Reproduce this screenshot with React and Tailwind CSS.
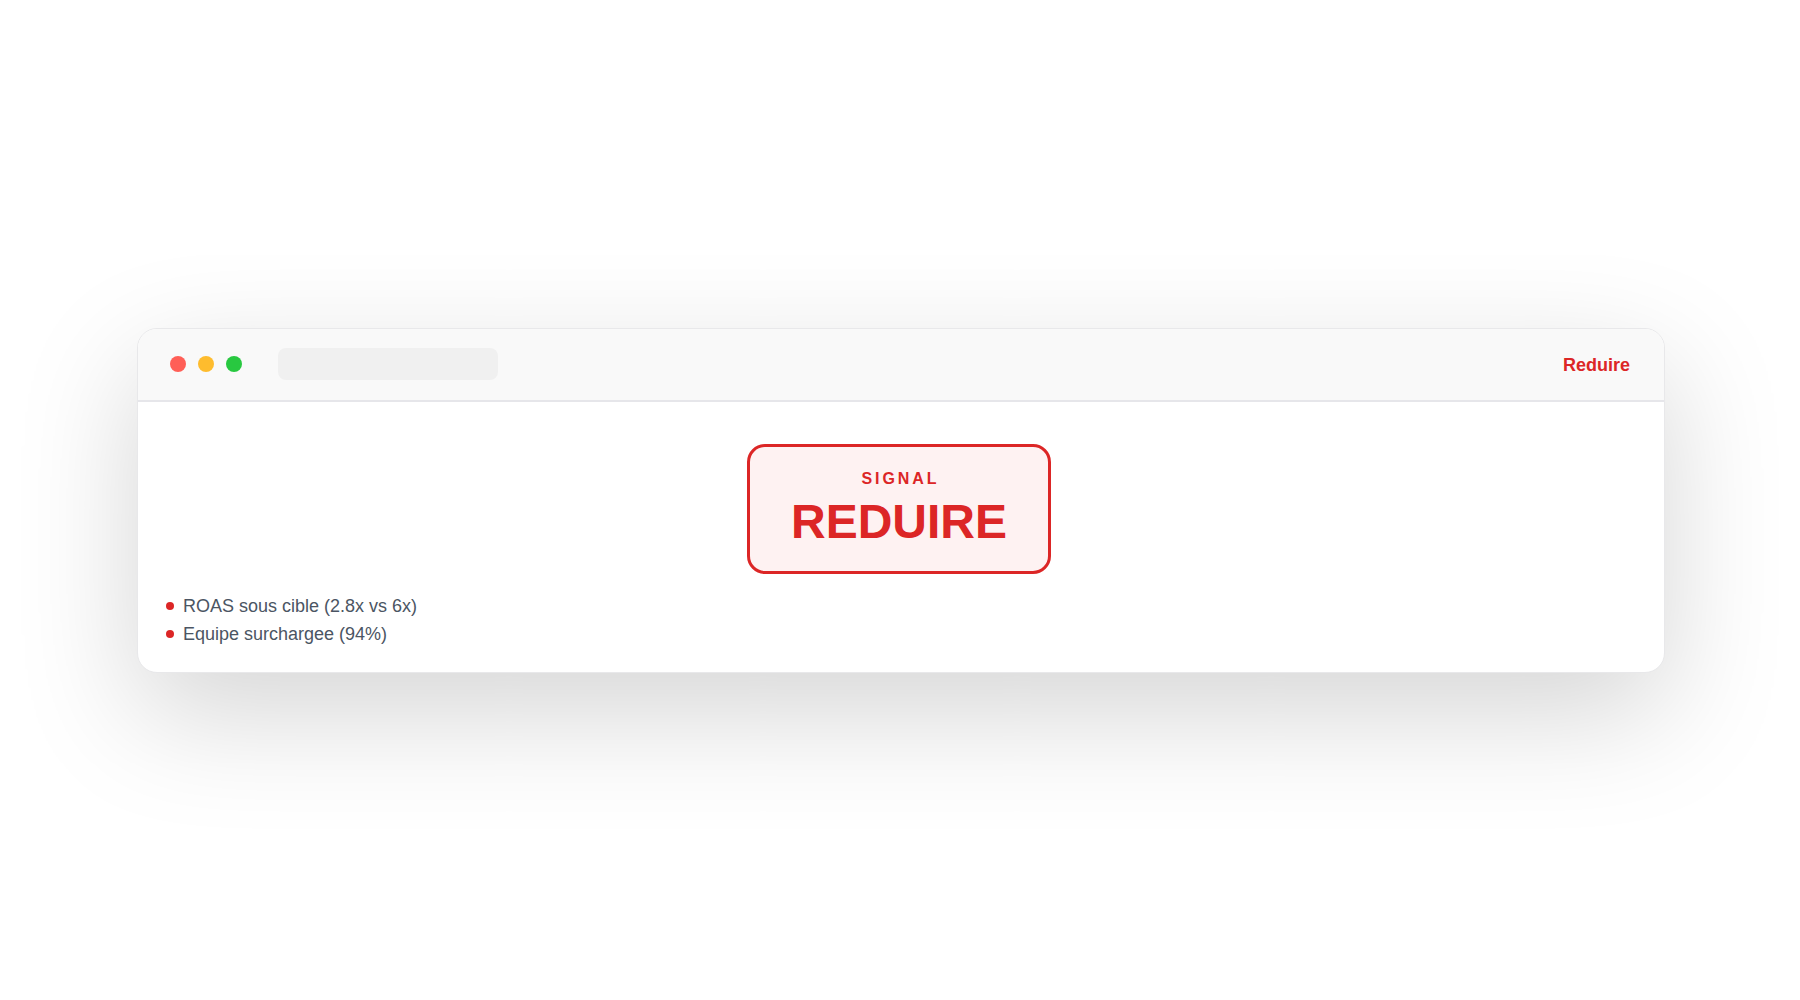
import React from 'react';

const reasons = ['ROAS sous cible (2.8x vs 6x)', 'Equipe surchargee (94%)'];

const App = () => {
    return (
        <div className="w-full h-[1000px] bg-white flex items-center justify-center font-['Liberation_Sans',Arial,sans-serif]">
            <div className="w-[1528px] ml-[2px] bg-white rounded-[20px] border border-[#e8e8ea] overflow-hidden shadow-[0_40px_120px_rgba(0,0,0,0.17)]">
                {/* title bar */}
                <div className="h-[73px] bg-[#f9f9f9] border-b-2 border-[#e6e6ea] flex items-center pl-8 pr-[34px]">
                    <div className="flex items-center gap-3">
                        <span className="w-4 h-4 rounded-full bg-[#ff5f57]" />
                        <span className="w-4 h-4 rounded-full bg-[#febc2e]" />
                        <span className="w-4 h-4 rounded-full bg-[#28c840]" />
                    </div>
                    <div className="ml-9 w-[220px] h-8 rounded-lg bg-[#f0f0f0]" />
                    <div className="ml-auto mt-[3px] text-[18px] font-bold text-[#dc2626]">Reduire</div>
                </div>

                {/* body */}
                <div className="pt-[42px] pb-6 pl-7 pr-8">
                    <div className="flex justify-center">
                        <div className="border-[3px] border-[#dc2626] bg-[#fef2f2] rounded-[18px] w-[304px] pt-5 pb-[25px] flex flex-col items-center">
                            <div className="text-[16px] leading-6 font-bold tracking-[0.18em] pl-[0.18em] text-[#dc2626]">SIGNAL</div>
                            <div className="mt-[7px] text-[48px] leading-[48px] font-bold text-[#dc2626]">REDUIRE</div>
                        </div>
                    </div>
                    <ul className="mt-[18px]">
                        {reasons.map(r => (
                            <li key={r} className="flex items-center text-[18px] leading-7 text-[#4b5563]">
                                <span className="w-2 h-2 rounded-full bg-[#dc2626] mr-[9px]" />
                                {r}
                            </li>
                        ))}
                    </ul>
                </div>
            </div>
        </div>
    );
};

export default App;
